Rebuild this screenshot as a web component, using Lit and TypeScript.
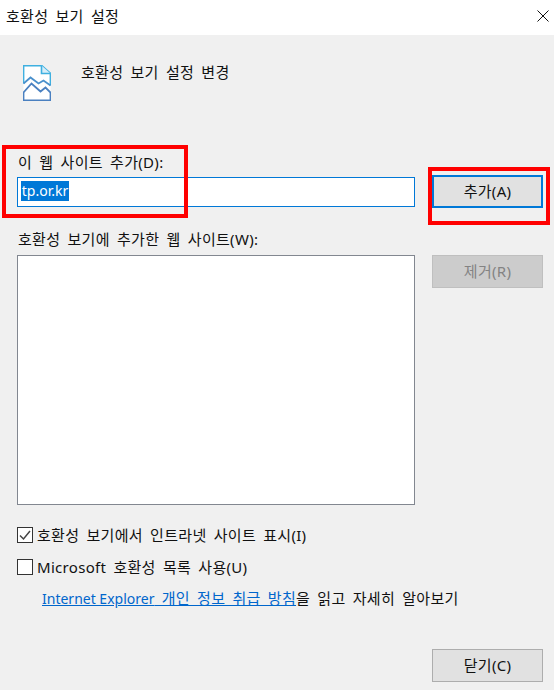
import { LitElement, html, css } from "lit";
import { customElement } from "lit/decorators.js";

@customElement("app-root")
export class AppRoot extends LitElement {
  static styles = css`
    :host {
      display: block;
      width: 554px;
      height: 690px;
      position: relative;
      overflow: hidden;
      background: #f0f0f0;
      color: #111;
      font-family: "Noto Sans", "Noto Sans CJK KR", sans-serif;
      font-size: 15px;
      line-height: 20px;
      word-spacing: 3px;
      letter-spacing: 0.3px;
    }
    * { box-sizing: border-box; }
    .lat { font-size: 14px; word-spacing: 0; letter-spacing: 0; }
    .title {
      height: 35px;
      background: #fff;
      display: flex;
      align-items: center;
      justify-content: space-between;
      padding: 0 5px 3px 6px;
    }
    .close { display: block; width: 12px; height: 12px; }
    .body {
      display: flex;
      flex-direction: column;
      padding: 0 11px 8px 17px;
      height: 655px;
    }
    .head { display: flex; gap: 30px; padding: 30px 0 0 6px; height: 117px; }
    .head .txt { margin-top: -3px; }
    .icon { width: 28px; height: 36px; display: block; }
    .grid {
      display: grid;
      grid-template-columns: 398px 111px;
      column-gap: 17px;
    }
    .label { height: 25px; display: flex; align-items: flex-start; margin-left: 1px; }
    .input {
      height: 30px;
      border: 1px solid #0078d7;
      background: #fff;
      padding: 3px 0 0 3px;
    }
    .sel { background: #0078d7; color: #fff; display: block; width: 48px; height: 20px; font-size: 14px; line-height: 19px; letter-spacing: 0; text-align: center; }
    .btn {
      height: 33px;
      border: 1px solid #adadad;
      background: #e1e1e1;
      display: flex;
      align-items: center;
      justify-content: center;
      padding-bottom: 2px;
    }
    .btn.primary { border: 2px solid #0078d7; margin-top: -2px; padding-bottom: 1px; }
    .btn.off { background: #cccccc; border-color: #bfbfbf; color: #838383; }
    .l2 { margin-top: 21px; height: 26px; }
    .list { height: 250px; background: #fff; border: 1px solid #828790; }
    .slot-a { padding-top: 25px; }
    .slot-b { padding-top: 47px; }
    .checks { display: flex; flex-direction: column; margin-top: 19px; }
    .check { display: flex; align-items: center; gap: 4px; height: 22px; margin-bottom: 10px; }
    .box {
      width: 16px;
      height: 16px;
      border: 1px solid #333;
      background: #fff;
      display: block;
      flex: none;
    }
    .info { padding-left: 25px; white-space: nowrap; }
    .info a { color: #0066cc; text-decoration: underline; }
    .footer { margin-top: auto; display: flex; justify-content: flex-end; }
    .footer .btn { width: 111px; }
    .mark { position: absolute; border: 4px solid #f00; pointer-events: none; }
    .m1 { left: 2px; top: 145px; width: 186px; height: 73px; }
    .m2 { left: 428px; top: 167px; width: 122px; height: 58px; }
  `;

  render() {
    return html`
      <div class="title">
        <span>호환성 보기 설정</span>
        <svg class="close" viewBox="0 0 12 12"><path d="M0.5 0.5L11.5 11.5M11.5 0.5L0.5 11.5" stroke="#111" fill="none"/></svg>
      </div>
      <div class="body">
        <div class="head">
          <svg class="icon" viewBox="-0.5 -0.5 28 36">
            <path d="M0 0H18L27 8V35H0Z" fill="#fff"/>
            <path d="M0 18V0H18L27 8V20" fill="none" stroke="#3fb0e0" stroke-width="1.8"/>
            <path d="M18 0V8H27" fill="#d7eef9" stroke="#3fb0e0" stroke-width="1.6"/>
            <path d="M0 18L7 12L15 18L20 15L27 20" fill="none" stroke="#4a90cc" stroke-width="1.8"/>
            <path d="M0 27L8 18L17 26L22 22L27 27V35H0Z" fill="none" stroke="#4a80c0" stroke-width="1.8"/>
          </svg>
          <span class="txt">호환성 보기 설정 변경</span>
        </div>
        <div class="grid">
          <div>
            <div class="label">이 웹 사이트 추가(D):</div>
            <div class="input"><span class="sel">tp.or.kr</span></div>
          </div>
          <div class="slot-a"><div class="btn primary">추가(A)</div></div>
          <div>
            <div class="label l2">호환성 보기에 추가한 웹 사이트(W):</div>
            <div class="list"></div>
          </div>
          <div class="slot-b"><div class="btn off">제거(R)</div></div>
        </div>
        <div class="checks">
          <label class="check">
            <svg class="box" viewBox="0 0 14 14"><path d="M2 7.5L5.5 11L12 3" fill="none" stroke="#444" stroke-width="1.5"/></svg>
            <span>호환성 보기에서 인트라넷 사이트 표시(I)</span>
          </label>
          <label class="check">
            <span class="box"></span>
            <span>Microsoft 호환성 목록 사용(U)</span>
          </label>
          <div class="info"><a><span class="lat">Internet Explorer</span> 개인 정보 취급 방침</a>을 읽고 자세히 알아보기</div>
        </div>
        <div class="footer"><div class="btn">닫기(C)</div></div>
      </div>
      <div class="mark m1"></div>
      <div class="mark m2"></div>
    `;
  }
}
